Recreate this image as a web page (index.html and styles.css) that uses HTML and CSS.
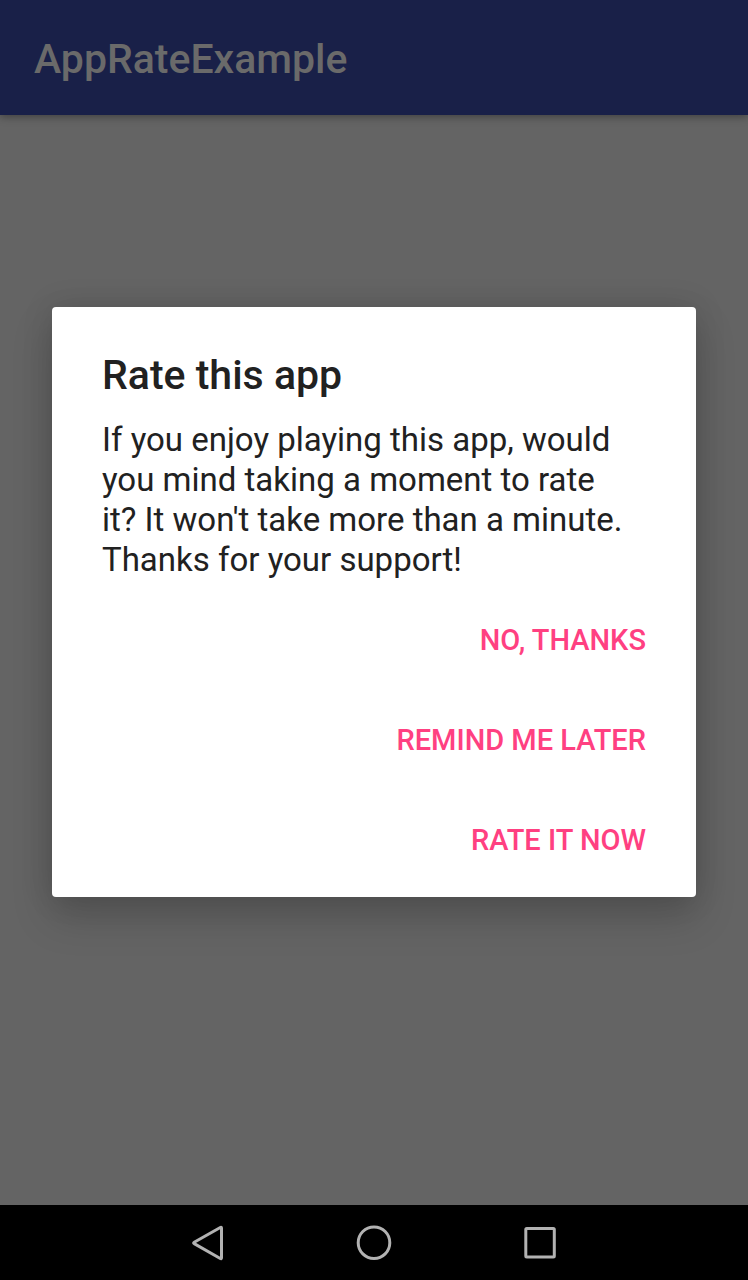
FILE: index.html
```html
<!DOCTYPE html>
<html lang="en">
<head>
<meta charset="utf-8">
<meta name="viewport" content="width=device-width, initial-scale=1">
<title>AppRateExample</title>
<link rel="stylesheet" href="styles.css">
</head>
<body>
<div class="screen">
  <header class="app-bar">
    <h1 class="app-title">AppRateExample</h1>
  </header>
  <main class="content">
    <section class="dialog" role="dialog" aria-labelledby="dialog-title" aria-describedby="dialog-message">
      <h2 class="dialog-title" id="dialog-title">Rate this app</h2>
      <p class="dialog-message" id="dialog-message">If you enjoy playing this app, would you mind taking a moment to rate it? It won't take more than a minute. Thanks for your support!</p>
      <div class="dialog-actions">
        <button class="action" type="button">NO, THANKS</button>
        <button class="action" type="button">REMIND ME LATER</button>
        <button class="action" type="button">RATE IT NOW</button>
      </div>
    </section>
  </main>
  <nav class="nav-bar" aria-label="System">
    <button class="nav-button" type="button" aria-label="Back">
      <svg class="nav-icon" viewBox="0 0 40 40"><path d="M32.300 4.500q1.200-.7 1.200.7v29.600q0 1.400-1.200.7L6.200 20.600q-1.200-.6 0-1.300z"/></svg>
    </button>
    <button class="nav-button" type="button" aria-label="Home">
      <svg class="nav-icon" viewBox="0 0 40 40"><circle cx="20" cy="19.700" r="15.800"/></svg>
    </button>
    <button class="nav-button" type="button" aria-label="Overview">
      <svg class="nav-icon" viewBox="0 0 40 40"><rect x="5.800" y="5.500" width="28.500" height="28.500" rx="1"/></svg>
    </button>
  </nav>
</div>
</body>
</html>
```
FILE: styles.css
```css
* {
  box-sizing: border-box;
}

body {
  margin: 0;
  font-family: Roboto, sans-serif;
  background: #646464;
}

.screen {
  display: flex;
  flex-direction: column;
  min-height: 100vh;
}

.app-bar {
  display: flex;
  align-items: center;
  height: 115px;
  padding: 2px 34px 0;
  background: #192048;
  box-shadow: 0 2px 8px rgba(0, 0, 0, 0.35);
}

.app-title {
  margin: 0;
  color: #6a6a6a;
  font-size: 41px;
  font-weight: 500;
  line-height: 48px;
}

.content {
  display: flex;
  flex: 1;
  flex-direction: column;
  padding: 192px 52px 48px;
}

.dialog {
  padding: 44px 34px 7px 50px;
  background: #fff;
  border-radius: 4px;
  box-shadow: 0 20px 40px rgba(0, 0, 0, 0.18), 0 0 32px rgba(0, 0, 0, 0.12);
}

.dialog-title {
  margin: 0 0 21px;
  color: #212121;
  font-size: 41px;
  font-weight: 500;
  line-height: 48px;
}

.dialog-message {
  margin: 0 0 10px;
  padding-right: 32px;
  color: #212121;
  font-size: 33px;
  line-height: 40px;
}

.dialog-actions {
  display: flex;
  flex-direction: column;
  align-items: flex-end;
}

.action {
  height: 100px;
  padding: 0 16px;
  border: 0;
  background: transparent;
  color: #ff4081;
  font: 500 29px/36px Roboto, sans-serif;
}

.nav-bar {
  display: flex;
  justify-content: center;
  height: 75px;
  background: #000;
}

.nav-button {
  display: flex;
  align-items: center;
  justify-content: center;
  width: 166px;
  padding: 0;
  border: 0;
  background: transparent;
}

.nav-icon {
  width: 40px;
  height: 40px;
  fill: none;
  stroke: #b2b2b2;
  stroke-width: 3;
  stroke-linejoin: round;
}
```
